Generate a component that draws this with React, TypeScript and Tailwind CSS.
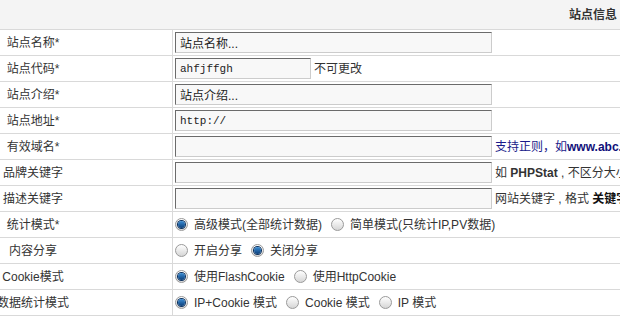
import React from 'react';

const sans = "font-['Liberation_Sans','Noto_Sans_CJK_SC',sans-serif]";

const Radio = ({ checked }: { checked?: boolean }) => (
  <span className="relative inline-flex items-center justify-center w-[13px] h-[13px] rounded-full border border-[#9a9a9a] bg-gradient-to-b from-[#ffffff] to-[#d6d6d6] shrink-0">
    {checked && (
      <span className="w-[7px] h-[7px] rounded-full bg-gradient-to-b from-[#3d8fd6] to-[#0b3f7a] ring-1 ring-[#0a2f5c]" />
    )}
  </span>
);

const TextInput = ({ value, w = 'w-[317px]', mono }: { value?: string; w?: string; mono?: boolean }) => (
  <input
    readOnly
    defaultValue={value}
    className={`${w} h-[21px] ml-[2px] px-[4px] bg-[#f8f8f8] border border-t-[#6b6b6b] border-l-[#6b6b6b] border-r-[#cccccc] border-b-[#cccccc] text-[#222] outline-none ${
      mono ? "font-['Liberation_Mono',monospace] text-[11px]" : `${sans} text-[12px]`
    }`}
  />
);

const Row = ({ label, children }: { label: string; children: React.ReactNode }) => (
  <div className="flex h-[26px] border-b border-[#d9d9d9]">
    <div className="w-[173px] shrink-0 border-r border-[#d9d9d9] flex items-center">
      <div className="w-[66px] flex justify-center whitespace-nowrap text-[12px] text-[#333]">{label}</div>
    </div>
    <div className="flex items-center whitespace-nowrap text-[12px] text-[#333]">{children}</div>
  </div>
);

const Option = ({ checked, label, first }: { checked?: boolean; label: string; first?: boolean }) => (
  <span className={`inline-flex items-center ${first ? 'ml-[2px]' : 'ml-[9px]'}`}>
    <Radio checked={checked} />
    <span className="ml-[6px]">{label}</span>
  </span>
);

export default function App() {
  return (
    <div className={`w-[620px] h-[316px] overflow-hidden bg-white ${sans}`}>
      <div className="h-[30px] bg-[#f4f4f4] border-b border-[#d9d9d9] flex items-center justify-end pr-[3px]">
        <span className="text-[12px] font-bold text-[#333]">站点信息</span>
      </div>
      <Row label="站点名称*">
        <TextInput value="站点名称..." />
      </Row>
      <Row label="站点代码*">
        <TextInput value="ahfjffgh" w="w-[136px]" mono />
        <span className="ml-[3px]">不可更改</span>
      </Row>
      <Row label="站点介绍*">
        <TextInput value="站点介绍..." />
      </Row>
      <Row label="站点地址*">
        <TextInput value="http://" mono />
      </Row>
      <Row label="有效域名*">
        <TextInput />
        <span className="ml-[3px] text-[#1a1a8a]">
          支持正则，如<b className="text-[#10107a]">www.abc.com</b>
        </span>
      </Row>
      <Row label="品牌关键字">
        <TextInput />
        <span className="ml-[3px]">
          如 <b>PHPStat</b> , 不区分大小写
        </span>
      </Row>
      <Row label="描述关键字">
        <TextInput />
        <span className="ml-[3px]">
          网站关键字 , 格式 <b className="text-[#111]">关键字</b>
        </span>
      </Row>
      <Row label="统计模式*">
        <Option first checked label="高级模式(全部统计数据)" />
        <Option label="简单模式(只统计IP,PV数据)" />
      </Row>
      <Row label="内容分享">
        <Option first label="开启分享" />
        <Option checked label="关闭分享" />
      </Row>
      <Row label="Cookie模式">
        <Option first checked label="使用FlashCookie" />
        <Option label="使用HttpCookie" />
      </Row>
      <Row label="数据统计模式">
        <Option first checked label="IP+Cookie 模式" />
        <Option label="Cookie 模式" />
        <Option label="IP 模式" />
      </Row>
    </div>
  );
}
